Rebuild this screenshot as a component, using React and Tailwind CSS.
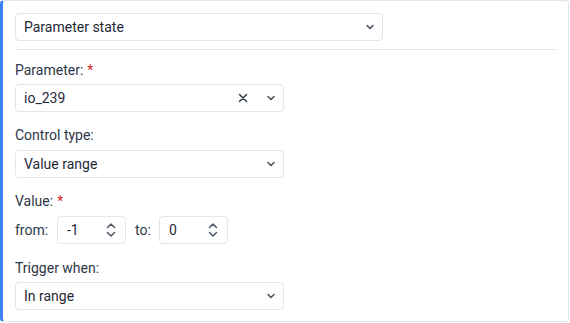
import React from 'react';

const Chevron = () => (
  <svg width="12" height="12" viewBox="0 0 12 12" fill="none" stroke="#4b5563" strokeWidth="1.6" strokeLinecap="round" strokeLinejoin="round">
    <path d="M3 4.5 L6 7.5 L9 4.5" />
  </svg>
);

const Cross = () => (
  <svg width="12" height="12" viewBox="0 0 12 12" fill="none" stroke="#374151" strokeWidth="1.6" strokeLinecap="round">
    <path d="M2.5 2.5 L9.5 9.5 M9.5 2.5 L2.5 9.5" />
  </svg>
);

const UpDown = () => (
  <svg width="12" height="18" viewBox="0 0 12 18" fill="none" stroke="#4b5563" strokeWidth="1.5" strokeLinecap="round" strokeLinejoin="round">
    <path d="M2.5 6.5 L6 3 L9.5 6.5" />
    <path d="M2.5 11.5 L6 15 L9.5 11.5" />
  </svg>
);

const Select = ({ value, width, clearable }) => (
  <div className={`${width} h-[28px] flex items-center border border-[#e2e5e9] rounded pl-[8px] pr-[6px]`}>
    <span className="flex-1">{value}</span>
    {clearable && <span className="mr-[16px] flex items-center"><Cross /></span>}
    <Chevron />
  </div>
);

const Label = ({ children, required, className = '' }) => (
  <div className={`h-[20px] leading-[20px] text-[#2d3748] ${className}`}>
    {children}
    {required && <span className="text-[#dc2626] ml-[4px]">*</span>}
  </div>
);

const NumberInput = ({ value }) => (
  <div className="w-[69px] h-[28px] flex items-center border border-[#e2e5e9] rounded pl-[9px] pr-[8px]">
    <span className="flex-1">{value}</span>
    <UpDown />
  </div>
);

export default function App() {
  return (
    <div className="w-[570px] h-[323px] bg-white text-[14px] text-[#1f2937]" style={{ fontFamily: 'Roboto, "Liberation Sans", sans-serif' }}>
      <div className="w-[569px] h-[322px] border border-[#e2e5e9] border-l-[3px] border-l-[#3b82f6] rounded-[4px] pl-[12px] pr-[11px] pt-[12px]">
        <Select value="Parameter state" width="w-[368px]" />
        <div className="h-px bg-[#e5e7eb] mt-[8px]" />
        <Label required className="mt-[10px]">Parameter:</Label>
        <div className="mt-[4px]">
          <Select value="io_239" width="w-[269px]" clearable />
        </div>
        <Label className="mt-[13px]">Control type:</Label>
        <div className="mt-[5px]">
          <Select value="Value range" width="w-[269px]" />
        </div>
        <Label required className="mt-[13px]">Value:</Label>
        <div className="mt-[5px] flex items-center">
          <span className="w-[42px] text-[#2d3748]">from:</span>
          <NumberInput value="-1" />
          <span className="ml-[9px] w-[24px] text-[#2d3748]">to:</span>
          <NumberInput value="0" />
        </div>
        <Label className="mt-[14px]">Trigger when:</Label>
        <div className="mt-[4px]">
          <Select value="In range" width="w-[269px]" />
        </div>
      </div>
    </div>
  );
}
